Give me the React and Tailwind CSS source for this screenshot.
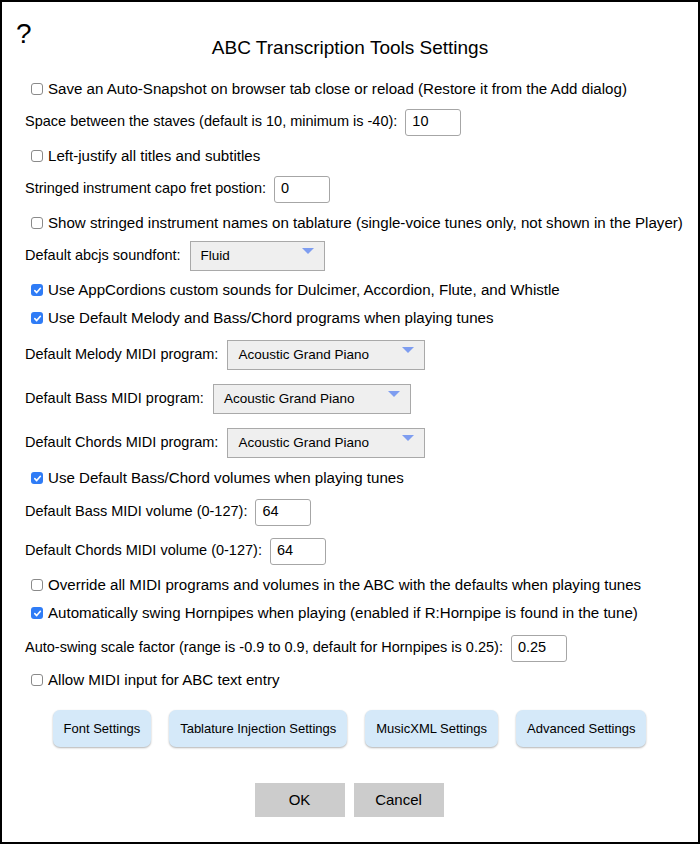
const font = { fontFamily: "'Liberation Sans', Arial, sans-serif" }

function Check({ checked }) {
  if (checked) {
    return (
      <span className="inline-flex items-center justify-center w-[12px] h-[12px] rounded-[3px] bg-[#2f7cf6] shrink-0">
        <svg width="9" height="9" viewBox="0 0 10 10">
          <path d="M2 5.2 L4.1 7.3 L8.2 2.6" stroke="white" strokeWidth="1.8" fill="none" strokeLinecap="round" strokeLinejoin="round" />
        </svg>
      </span>
    )
  }
  return <span className="inline-block w-[12px] h-[12px] rounded-[3px] border border-[#8a8a8a] bg-white shrink-0" />
}

function CheckRow({ checked, label, className = "" }) {
  return (
    <div className={`h-[28px] flex items-center pl-[29px] gap-[5px] text-[15.1px] ${className}`}>
      <Check checked={checked} />
      <span>{label}</span>
    </div>
  )
}

function InputRow({ label, value, className = "" }) {
  return (
    <div className={`h-[30px] flex items-center pl-[23px] gap-[8px] text-[14.5px] ${className}`}>
      <span>{label}</span>
      <div className="w-[56px] h-[27px] border border-[#a6a6a6] rounded-[3px] bg-white flex items-center px-[6px]">{value}</div>
    </div>
  )
}

function SelectRow({ label, value, width, className = "" }) {
  return (
    <div className={`h-[30px] flex items-center pl-[23px] gap-[9px] text-[14.5px] ${className}`}>
      <span>{label}</span>
      <div className={`${width} h-[30px] border border-[#a9a9a9] bg-[#efefef] flex items-center justify-between pl-[10px] pr-[10px] text-[13.5px]`}>
        <span>{value}</span>
        <svg width="12" height="8" viewBox="0 0 12 8" className="-mt-[9px]">
          <path d="M0 0 H12 L6 6 Z" fill="#7e9df0" />
        </svg>
      </div>
    </div>
  )
}

export default function App() {
  const settingsBtns = ["Font Settings", "Tablature Injection Settings", "MusicXML Settings", "Advanced Settings"]

  return (
    <div className="w-[700px] h-[844px] bg-white border-2 border-black text-[15px] text-black overflow-hidden" style={font}>
      <div className="h-[71px] relative">
        <div className="absolute left-[14px] top-[18px] text-[28px] leading-none">?</div>
        <div className="pt-[34px] text-center text-[19px] leading-[23px]">ABC Transcription Tools Settings</div>
      </div>

      <CheckRow label="Save an Auto-Snapshot on browser tab close or reload (Restore it from the Add dialog)" className="mt-[2px]" />
      <InputRow label="Space between the staves (default is 10, minimum is -40):" value="10" className="mt-[4px]" />
      <CheckRow label="Left-justify all titles and subtitles" className="mt-[5px]" />
      <InputRow label="Stringed instrument capo fret postion:" value="0" className="mt-[4px]" />
      <CheckRow label="Show stringed instrument names on tablature (single-voice tunes only, not shown in the Player)" className="mt-[5px]" />
      <SelectRow label="Default abcjs soundfont:" value="Fluid" width="w-[135px]" className="mt-[4px]" />
      <CheckRow checked label="Use AppCordions custom sounds for Dulcimer, Accordion, Flute, and Whistle" className="mt-[5px]" />
      <CheckRow checked label="Use Default Melody and Bass/Chord programs when playing tunes" />
      <SelectRow label="Default Melody MIDI program:" value="Acoustic Grand Piano" width="w-[198px]" className="mt-[8px]" />
      <SelectRow label="Default Bass MIDI program:" value="Acoustic Grand Piano" width="w-[198px]" className="mt-[14px]" />
      <SelectRow label="Default Chords MIDI program:" value="Acoustic Grand Piano" width="w-[198px]" className="mt-[14px]" />
      <CheckRow checked label="Use Default Bass/Chord volumes when playing tunes" className="mt-[6px]" />
      <InputRow label="Default Bass MIDI volume (0-127):" value="64" className="mt-[5px]" />
      <InputRow label="Default Chords MIDI volume (0-127):" value="64" className="mt-[9px]" />
      <CheckRow label="Override all MIDI programs and volumes in the ABC with the defaults when playing tunes" className="mt-[5px]" />
      <CheckRow checked label="Automatically swing Hornpipes when playing (enabled if R:Hornpipe is found in the tune)" />
      <InputRow label="Auto-swing scale factor (range is -0.9 to 0.9, default for Hornpipes is 0.25):" value="0.25" className="mt-[6px]" />
      <CheckRow label="Allow MIDI input for ABC text entry" className="mt-[3px]" />

      <div className="mt-[16px] flex justify-center gap-[18px] pr-[1px]">
        {settingsBtns.map((b) => (
          <button key={b} className="h-[37px] px-[11px] rounded-[7px] bg-[#d5e9f9] text-[13px] shadow-[0_1px_2px_rgba(0,0,0,0.3)]" style={font}>
            {b}
          </button>
        ))}
      </div>

      <div className="mt-[36px] flex justify-center gap-[9px] pr-[2px]">
        <button className="w-[90px] h-[34px] bg-[#cccccc] text-[15px]" style={font}>OK</button>
        <button className="w-[90px] h-[34px] bg-[#cccccc] text-[15px]" style={font}>Cancel</button>
      </div>
    </div>
  )
}
